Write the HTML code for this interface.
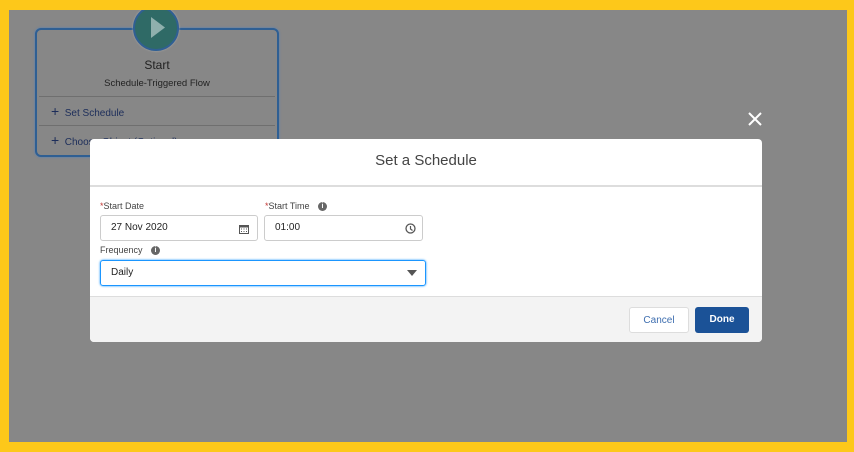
<!DOCTYPE html><html><head><style>
body{margin:0;width:854px;height:452px;background:#fdc81a;position:relative;overflow:hidden;font-family:"Liberation Sans",sans-serif}
.bg{position:absolute;left:9px;top:10px;width:838px;height:432px;background:#878787;overflow:hidden}
.card{position:absolute;left:26px;top:18px;width:240px;height:125px;border:2px solid #2f5f93;border-radius:6px;box-shadow:0 0 2px #4a7fc0;background:#878787}
.circ{position:absolute;left:96px;top:-25px;width:42px;height:42px;border-radius:50%;background:#2f6a66;border:2px solid #2f5f93;box-shadow:0 0 2px #aaa}
.t{position:absolute;width:100%;text-align:center;color:#222}
.row{position:absolute;left:2px;right:2px;border-top:1px solid #6f6f6f;height:28px;font-size:10px;color:#1c2d5a;line-height:28px;padding-left:12px}
.modal{position:absolute;left:90px;top:139px;width:672px;height:203px;background:#fff;border-radius:4px;overflow:hidden}
.hd{height:46px;border-bottom:2px solid #ddd;text-align:center;line-height:44px;font-size:15px;color:#444}
.ft{position:absolute;left:0;right:0;bottom:0;height:45px;background:#f3f3f3;border-top:1px solid #ddd}
.lbl{position:absolute;font-size:9px;color:#444}
.lbl b{color:#c23934;font-weight:normal}
.in{position:absolute;height:26px;border:1px solid #ccc;border-radius:3px;font-size:10px;color:#222;line-height:24px;padding-left:10px;box-sizing:border-box}
.info{display:inline-block;width:9px;height:9px;border-radius:50%;background:#666;color:#fff;font-size:7px;text-align:center;line-height:9px;font-weight:bold;vertical-align:middle;margin-left:6px}
.btn{position:absolute;top:10px;height:26px;border-radius:3px;font-size:10px;text-align:center;line-height:26px;box-sizing:border-box}
</style></head><body>
<div class="bg">
<div class="card">
<div class="circ"><svg width="42" height="42"><polygon points="16,10 16,31 30,20.5" fill="#8fb0ad"/></svg></div>
<div class="t" style="top:28px;font-size:12px">Start</div>
<div class="t" style="top:48px;font-size:9.5px">Schedule-Triggered Flow</div>
<div class="row" style="top:66px"><span style="font-size:14px">+</span>&nbsp; Set Schedule</div>
<div class="row" style="top:95px"><span style="font-size:14px">+</span>&nbsp; Choose Object (Optional)</div>
</div>
</div>
<svg style="position:absolute;left:748px;top:112px" width="14" height="14"><path d="M1 1L13 13M13 1L1 13" stroke="#fff" stroke-width="2"/></svg>
<div class="modal">
<div class="hd">Set a Schedule</div>
<div class="lbl" style="left:10px;top:62px"><b>*</b>Start Date</div>
<div class="lbl" style="left:175px;top:62px"><b>*</b>Start Time <span class="info">i</span></div>
<div class="in" style="left:10px;top:76px;width:158px">27 Nov 2020<svg style="position:absolute;right:8px;top:8px" width="10" height="10"><rect x="0.5" y="1.5" width="9" height="8" fill="none" stroke="#555"/><rect x="0" y="1" width="10" height="2.5" fill="#555"/><path d="M2 5h1M4.5 5h1M7 5h1M2 7.5h1M4.5 7.5h1M7 7.5h1" stroke="#555"/></svg></div>
<div class="in" style="left:174px;top:76px;width:159px">01:00<svg style="position:absolute;right:6px;top:7px" width="11" height="11"><circle cx="5.5" cy="5.5" r="4.5" fill="none" stroke="#555" stroke-width="1.3"/><path d="M5.5 3v3l2 1.5" stroke="#555" fill="none" stroke-width="1.2"/></svg></div>
<div class="lbl" style="left:10px;top:106px">Frequency <span class="info">i</span></div>
<div class="in" style="left:10px;top:121px;width:326px;border-color:#1b96ff;box-shadow:0 0 2px #1b96ff">Daily<svg style="position:absolute;right:8px;top:9px" width="10" height="6"><polygon points="0,0 10,0 5,6" fill="#555"/></svg></div>
<div class="ft">
<div class="btn" style="left:539px;width:60px;border:1px solid #ddd;background:#fff;color:#3f6fb0">Cancel</div>
<div class="btn" style="left:605px;width:54px;background:#1b5297;color:#fff;font-weight:bold">Done</div>
</div>
</div>
</body></html>
